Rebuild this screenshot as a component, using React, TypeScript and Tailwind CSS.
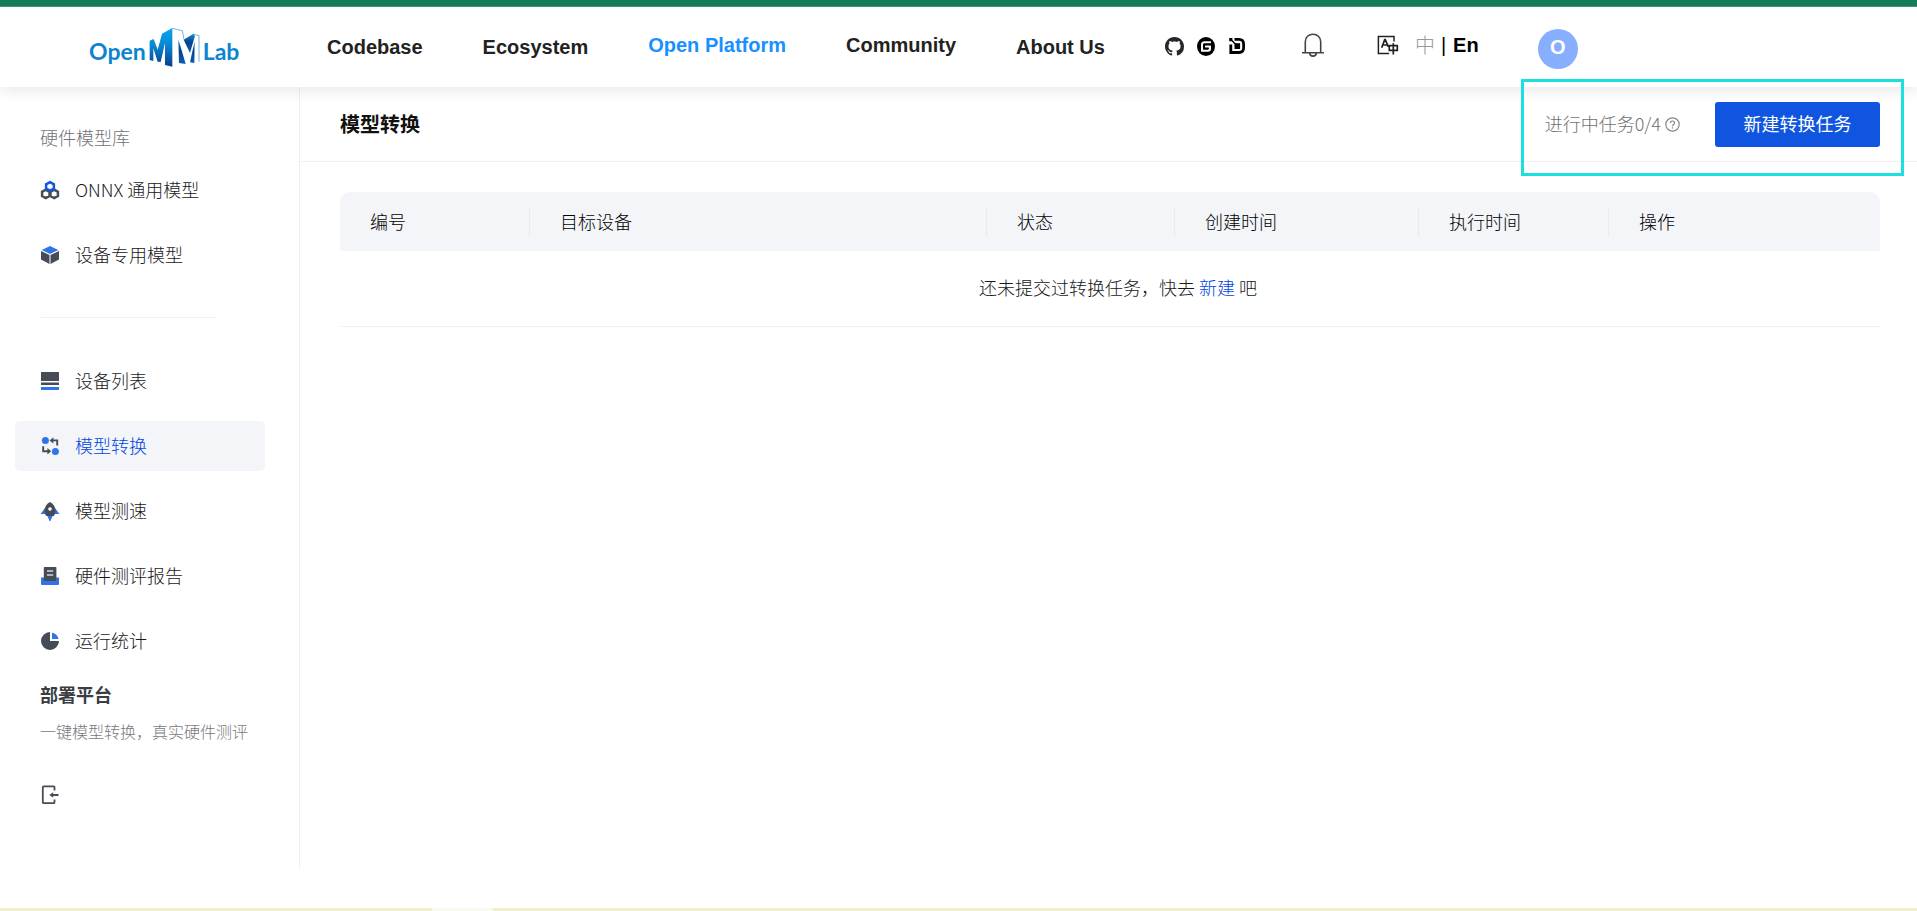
import type { ReactNode } from 'react';

const DARK = '#464c56';
const BLUE = '#2f74ea';

function LogoMark() {
  return (
    <svg width="53" height="41" viewBox="440 82 159 123" className="ml-0.5 shrink-0" aria-hidden="true">
      <defs>
        <linearGradient id="face" x1="0" y1="0" x2="0" y2="1">
          <stop offset="0" stopColor="#00a8ee" />
          <stop offset="0.45" stopColor="#0b86d2" />
          <stop offset="1" stopColor="#04408a" />
        </linearGradient>
        <linearGradient id="shade" x1="0" y1="0" x2="0" y2="1">
          <stop offset="0" stopColor="#0d8fd9" />
          <stop offset="0.45" stopColor="#053f8c" />
          <stop offset="1" stopColor="#0a62b0" />
        </linearGradient>
      </defs>
      <path d="M445 123L457 118L469 150L482 102L513 85V201L491 196V130L478 187L469 186L456 146V184L445 181Z" fill="url(#face)" />
      <path d="M531 120L537 138L553 193L533 190Z" fill="url(#shade)" />
      <path d="M547 120L575 103L581 108L566 160Z" fill="url(#shade)" />
      <path d="M566 188L580 124L579 190Z" fill="url(#shade)" />
      <path d="M513 86L543 93L548 119M575 103L593 108V186" fill="none" stroke="#2b8fd0" strokeWidth="2" />
    </svg>
  );
}

function Icon({ children }: { children: ReactNode }) {
  return (
    <svg width="18" height="18" viewBox="0 0 18 18" className="shrink-0 overflow-visible" aria-hidden="true">
      {children}
    </svg>
  );
}

const icons = {
  onnx: (
    <Icon>
      <g fill="none" strokeWidth="2.5">
        <path d="M4.8 8.7L8.5 10.8V14.9L4.8 17L1.1 14.9V10.8Z" stroke={DARK} />
        <path d="M13.2 8.7L16.9 10.8V14.9L13.2 17L9.5 14.9V10.8Z" stroke={DARK} />
        <path d="M9 1.1L12.9 3.3V7.5L9 9.7L5.1 7.5V3.3Z" stroke="#1556e0" fill="#fff" />
      </g>
    </Icon>
  ),
  cube: (
    <Icon>
      <path d="M9 0L17.3 4L9 8L0.7 4Z" fill={BLUE} />
      <path d="M0 5L8.5 9V18L0 13.6Z" fill={DARK} />
      <path d="M18 5L9.5 9V18L18 13.6Z" fill={DARK} />
    </Icon>
  ),
  list: (
    <Icon>
      <rect width="18" height="9" rx="0.5" fill={DARK} />
      <rect y="10.5" width="18" height="2.5" fill={DARK} />
      <rect y="15" width="18" height="3" fill={BLUE} />
    </Icon>
  ),
  convert: (
    <Icon>
      <circle cx="4.4" cy="3.6" r="3.5" fill={BLUE} />
      <circle cx="14.4" cy="14.4" r="3.5" fill={BLUE} />
      <path d="M16.2 8.6V3.4H11.5M2.2 9.2V14.2H7" fill="none" stroke={DARK} strokeWidth="1.9" />
      <path d="M12.4 0.2V6.6L8.6 3.4ZM6.4 11V17.4L10.2 14.2Z" fill={DARK} />
    </Icon>
  ),
  rocket: (
    <Icon>
      <path d="M4 6L-0.5 12H18.5L14 6Z" fill={BLUE} />
      <path d="M6 13H12L9.5 19H8.5Z" fill={BLUE} />
      <path d="M9 0C12.6 2 14.4 5 14.4 8.4C14.4 10.6 13.8 12.3 12.8 14H5.2C4.2 12.3 3.6 10.6 3.6 8.4C3.6 5 5.4 2 9 0Z" fill={DARK} />
      <circle cx="9" cy="7" r="1.8" fill="#fff" />
    </Icon>
  ),
  report: (
    <Icon>
      <path d="M0 10.5H18V17A1 1 0 0 1 17 18H1A1 1 0 0 1 0 17Z" fill={BLUE} />
      <rect x="2.8" width="12.6" height="14" rx="0.8" fill={DARK} />
      <path d="M6 4H12.2M6 8H12.2" stroke="#d4d6d9" strokeWidth="1.6" />
    </Icon>
  ),
  pie: (
    <Icon>
      <path d="M9 0A9 9 0 1 0 18 9H9Z" fill={DARK} />
      <path d="M11 0.4A9 9 0 0 1 17.6 7H11Z" fill={BLUE} />
    </Icon>
  ),
};

function NavItem({ icon, label, active }: { icon: ReactNode; label: string; active?: boolean }) {
  return (
    <li>
      <a
        href="#"
        aria-current={active ? 'page' : undefined}
        className={`flex h-[50px] items-center gap-4 rounded-[5px] pl-[26px] ${active ? 'bg-[#f3f5f9] text-[#0045e0]' : 'text-[#16181c]'}`}
      >
        {icon}
        <span className="pb-0.5">{label}</span>
      </a>
    </li>
  );
}

function TopBar() {
  return (
    <header className="relative z-10 flex h-20 shrink-0 items-center bg-white pl-[89px] font-['Liberation_Sans',Arial,sans-serif] text-xl font-bold text-[#222] shadow-[0_4px_14px_rgba(0,0,0,0.09)]">
      <a href="#" aria-label="OpenMMLab" className="flex w-[238px] items-center font-[Lato,sans-serif] text-[23px] font-bold text-[#0c84d0]">
        <span className="pt-2">Open</span>
        <LogoMark />
        <span className="pt-2 pl-0.5">Lab</span>
      </a>
      <nav className="flex items-center gap-[60px] whitespace-nowrap">
        <a href="#">Codebase</a>
        <a href="#">Ecosystem</a>
        <a href="#" className="pb-1 text-[#1890ff]">Open Platform</a>
        <a href="#" className="pb-1">Community</a>
        <a href="#">About Us</a>
      </nav>
      <div className="ml-[60px] flex items-center gap-[13px] pb-0.5">
        <a href="#" aria-label="GitHub">
          <svg width="19" height="19" viewBox="0 0 16 16" fill="#24272b">
            <path d="M8 0C3.58 0 0 3.58 0 8c0 3.54 2.29 6.53 5.47 7.59.4.07.55-.17.55-.38 0-.19-.01-.82-.01-1.49-2.01.37-2.53-.49-2.69-.94-.09-.23-.48-.94-.82-1.13-.28-.15-.68-.52-.01-.53.63-.01 1.08.58 1.23.82.72 1.21 1.87.87 2.33.66.07-.52.28-.87.51-1.07-1.78-.2-3.64-.89-3.64-3.95 0-.87.31-1.59.82-2.15-.08-.2-.36-1.02.08-2.12 0 0 .67-.21 2.2.82.64-.18 1.32-.27 2-.27s1.36.09 2 .27c1.53-1.04 2.2-.82 2.2-.82.44 1.1.16 1.92.08 2.12.51.56.82 1.27.82 2.15 0 3.07-1.87 3.75-3.65 3.95.29.25.54.73.54 1.48 0 1.07-.01 1.93-.01 2.2 0 .21.15.46.55.38A8.01 8.01 0 0 0 16 8c0-4.42-3.58-8-8-8z" />
          </svg>
        </a>
        <a href="#" aria-label="Gitee">
          <svg width="18" height="19" viewBox="0 0 24 24" preserveAspectRatio="none" fill="#000">
            <path d="M11.984 0A12 12 0 0 0 0 12a12 12 0 0 0 12 12 12 12 0 0 0 12-12A12 12 0 0 0 12 0a12 12 0 0 0-.016 0zm6.09 5.333c.328 0 .593.266.592.593v1.482a.594.594 0 0 1-.593.592H9.777c-.982 0-1.778.796-1.778 1.778v5.63c0 .327.266.592.593.592h5.63c.982 0 1.778-.796 1.778-1.778v-.296a.593.593 0 0 0-.592-.593h-4.15a.592.592 0 0 1-.592-.592v-1.482a.593.593 0 0 1 .593-.592h6.815c.327 0 .593.265.593.592v3.408a4 4 0 0 1-4 4H5.926a.593.593 0 0 1-.593-.593V9.778a4.444 4.444 0 0 1 4.445-4.444h8.296Z" />
          </svg>
        </a>
        <a href="#" aria-label="OpenDataLab">
          <svg width="18" height="18" viewBox="0 0 18 18" fill="none">
            <path d="M6.5 2.3H11Q15.6 2.3 15.6 7V10.8Q15.6 15.5 11 15.5H2.8V7.5" stroke="#000" strokeWidth="2.8" />
            <rect x="6.5" y="6.2" width="5.6" height="5.8" fill="#000" />
            <path d="M1.2 1H4.4V4.2H1.2ZM3.4 4L4.4 3L7.8 6.6L6.8 7.4Z" fill="#000" />
          </svg>
        </a>
      </div>
      <button type="button" aria-label="Notifications" className="ml-[55px] pb-1">
        <svg width="24" height="24" viewBox="0 0 24 24" fill="none" stroke="#444" strokeWidth="1.6">
          <path d="M4.3 19.5V8.7C4.3 4.2 7.7 1.2 12 1.2S19.7 4.2 19.7 8.7V19.5M1 19.7H23M8.7 20C8.9 24.2 15.1 24.2 15.3 20" />
        </svg>
      </button>
      <button type="button" aria-label="Language" className="ml-[52px] flex items-center pb-1">
        <svg width="22" height="20" viewBox="0 0 22 20" fill="none" stroke="#222" strokeWidth="1.5">
          <path d="M17 6.4V1.4H1.4V18.4H12.2" />
          <path d="M4.7 12.8L7.7 4.7H8.3L11.2 11.6M5.9 10H9.9M16.3 8.2V19.4M12.3 10.6H20.3V15.3H12.3Z" strokeWidth="1.7" />
        </svg>
        <span className="ml-4 font-['Noto_Sans_CJK_SC',sans-serif] text-xl leading-6 font-light text-[#999]">中</span>
        <span className="ml-1.5 font-normal text-black">|</span>
        <span className="ml-[7px] text-black">En</span>
      </button>
      <button type="button" aria-label="Account" className="mt-1 ml-[59px] size-10 rounded-full bg-[#87aeff] pb-1 text-xl font-bold text-white">
        O
      </button>
    </header>
  );
}

function Sidebar() {
  return (
    <aside className="w-[300px] shrink-0 border-r border-[#f0f0f1] pt-[38px]">
      <h2 className="pl-10 text-lg leading-6 text-[#707276]">硬件模型库</h2>
      <ul className="mt-4 mr-[34px] ml-[15px] flex flex-col gap-[15px]">
        <NavItem icon={icons.onnx} label="ONNX 通用模型" />
        <NavItem icon={icons.cube} label="设备专用模型" />
      </ul>
      <hr className="mt-[37px] mr-[83px] mb-[38px] ml-[41px] border-[#f0f0f1]" />
      <ul className="mr-[34px] ml-[15px] flex flex-col gap-[15px]">
        <NavItem icon={icons.list} label="设备列表" />
        <NavItem icon={icons.convert} label="模型转换" active />
        <NavItem icon={icons.rocket} label="模型测速" />
        <NavItem icon={icons.report} label="硬件测评报告" />
        <NavItem icon={icons.pie} label="运行统计" />
      </ul>
      <div className="mt-4 pl-10">
        <h3 className="text-lg leading-6 font-bold text-[#3a3d42]">部署平台</h3>
        <p className="mt-[13px] text-base leading-6 text-[#77797d]">一键模型转换，真实硬件测评</p>
        <button type="button" aria-label="收起侧栏" className="mt-[42px] block">
          <svg width="20" height="20" viewBox="0 0 20 20" fill="none" stroke={DARK} strokeWidth="1.8">
            <path d="M14.5 5.5V2.4Q14.5 1.4 13.5 1.4H3.8Q2.8 1.4 2.8 2.4V17.2Q2.8 18.2 3.8 18.2H13.5Q14.5 18.2 14.5 17.2V14.5M11 10H18.5" />
            <path d="M9.3 10L13.2 7.2V12.8Z" fill={DARK} stroke="none" />
          </svg>
        </button>
      </div>
    </aside>
  );
}

const columns = [
  { name: '编号', width: 'w-[190px]' },
  { name: '目标设备', width: '' },
  { name: '状态', width: 'w-[188px]' },
  { name: '创建时间', width: 'w-[244px]' },
  { name: '执行时间', width: 'w-[190px]' },
  { name: '操作', width: 'w-[271px]' },
];

export default function App() {
  return (
    <div className="flex min-h-screen flex-col bg-white font-['Noto_Sans_CJK_SC',sans-serif] text-lg font-light">
      <div className="h-[7px] shrink-0 border-b border-[#45977c] bg-[#167c5c]" />
      <TopBar />
      <div className="mb-10 flex flex-1">
        <Sidebar />
        <main className="min-w-0 flex-1">
          <div className="relative flex h-[75px] items-center border-b border-[#f0f0f1] pr-[37px] pl-10">
            <h1 className="text-xl font-bold text-[#111]">模型转换</h1>
            <div className="ml-auto flex items-center gap-1 text-[#707276]">
              <span className="pb-0.5">进行中任务0/4</span>
              <svg width="15" height="15" viewBox="0 0 15 15" fill="none" stroke="#86888c" strokeWidth="1.2" aria-hidden="true">
                <circle cx="7.5" cy="7.5" r="6.7" />
                <path d="M5.4 6.1C5.4 3.3 9.6 3.3 9.6 6C9.6 7.5 7.5 7.4 7.5 9.2M7.5 10.3V11.6" />
              </svg>
            </div>
            <button type="button" className="ml-[35px] h-[45px] w-[165px] rounded-[3px] bg-[#0f55e0] pb-0.5 font-normal text-white">
              新建转换任务
            </button>
            <div className="pointer-events-none absolute -top-2 right-[13px] z-20 h-[97px] w-[383px] border-3 border-[#1ce0e0]" />
          </div>
          <div className="pt-[30px] pr-[37px] pl-10">
            <table className="w-full table-fixed text-left">
              <thead>
                <tr className="h-[59px]">
                  {columns.map((c, i) => (
                    <th
                      key={c.name}
                      className={`bg-[#f3f5f9] p-0 font-light text-black first:rounded-tl-[10px] last:rounded-tr-[10px] ${c.width}`}
                    >
                      <div className={`pb-0.5 pl-[30px] leading-[26px] ${i < columns.length - 1 ? 'border-r border-[#e8eaee]' : ''}`}>{c.name}</div>
                    </th>
                  ))}
                </tr>
              </thead>
              <tbody>
                <tr className="h-[75px] border-b border-[#f0f0f1]">
                  <td colSpan={6} className="pb-0.5 pl-4 text-center text-[#16181c]">
                    还未提交过转换任务，快去 <a href="#" className="text-[#0045e0]">新建</a> 吧
                  </td>
                </tr>
              </tbody>
            </table>
          </div>
        </main>
      </div>
      <div className="flex h-[3px] shrink-0 bg-[#f0f0d0]">
        <div className="ml-[432px] w-[61px] bg-[#fafaf0]" />
      </div>
    </div>
  );
}
